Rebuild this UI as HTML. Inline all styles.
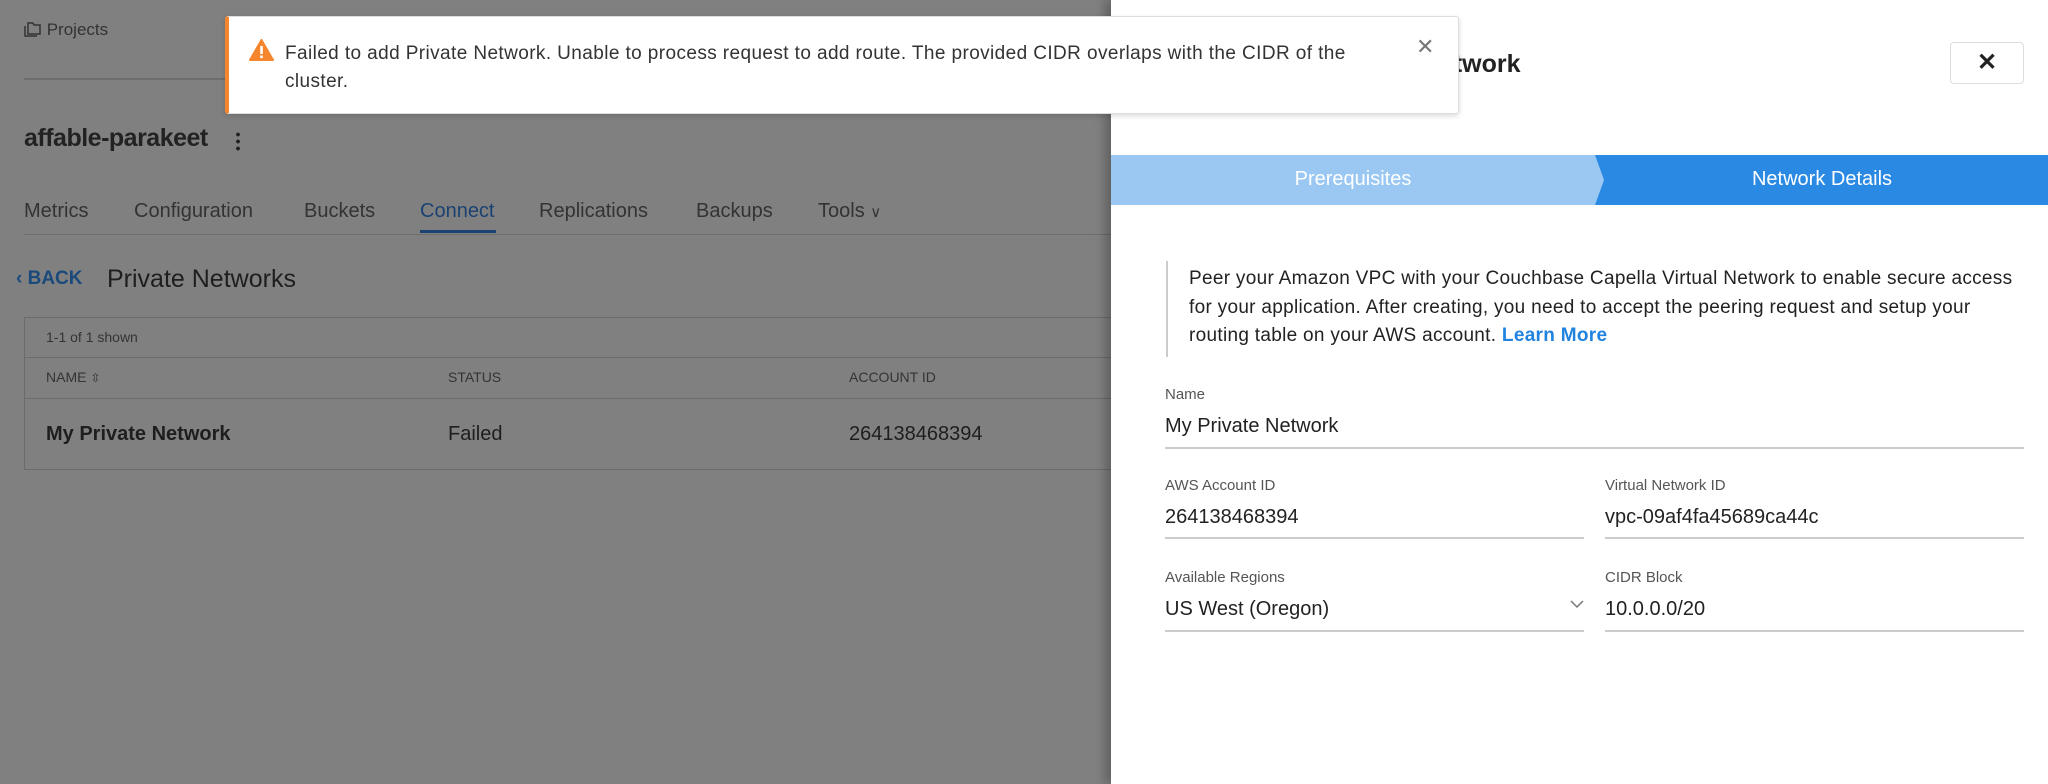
<!DOCTYPE html>
<html><head><meta charset="utf-8"><style>
*{margin:0;padding:0;box-sizing:border-box}
body{width:2048px;height:784px;position:relative;overflow:hidden;background:#808080;font-family:"Liberation Sans",sans-serif;color:#262626}
.a{position:absolute;white-space:nowrap}
</style></head><body>
<div class="a" style="left:24px;top:20px;font-size:17px;color:#333;">
<svg width="18" height="16" viewBox="0 0 18 16" style="vertical-align:-2px"><path d="M4 2h5l1 2h6v9H4z M1 5v10h12" fill="none" stroke="#333" stroke-width="1.5"/></svg> Projects</div>
<div class="a" style="left:24px;top:78px;width:1087px;height:2px;background:#6e6e6e"></div>
<div class="a" style="left:24px;top:124px;font-size:25px;font-weight:bold;color:#222;letter-spacing:-0.5px">affable-parakeet</div>
<div class="a" style="left:236px;top:131px;width:4px;height:20px;background:radial-gradient(circle,#222 1.8px,transparent 2px) 0 0/4px 7px repeat-y"></div>
<div class="a" style="left:0;top:200px;font-size:20px;color:#333;">
<span class="a" style="left:24px">Metrics</span><span class="a" style="left:134px">Configuration</span><span class="a" style="left:304px">Buckets</span><span class="a" style="left:420px;color:#1a4272">Connect</span><span class="a" style="left:539px">Replications</span><span class="a" style="left:696px">Backups</span><span class="a" style="left:818px">Tools <span style="font-size:15px">∨</span></span></div>
<div class="a" style="left:24px;top:234px;width:1087px;height:1px;background:#6e6e6e"></div>
<div class="a" style="left:420px;top:230px;width:76px;height:3px;background:#1a4272"></div>
<div class="a" style="left:16px;top:268px;font-size:19px;font-weight:bold;color:#1a4a7c">‹ BACK</div>
<div class="a" style="left:107px;top:265px;font-size:25px;color:#1e1e1e">Private Networks</div>
<div class="a" style="left:24px;top:317px;width:1100px;height:153px;border:1px solid #6c6c6c"></div>
<div class="a" style="left:24px;top:357px;width:1100px;height:1px;background:#6c6c6c"></div>
<div class="a" style="left:24px;top:398px;width:1100px;height:1px;background:#6c6c6c"></div>
<div class="a" style="left:46px;top:329px;font-size:14px;color:#333">1-1 of 1 shown</div>
<div class="a" style="left:46px;top:369px;font-size:14px;color:#333">NAME <span style="font-size:12px">⇳</span></div>
<div class="a" style="left:448px;top:369px;font-size:14px;color:#333">STATUS</div>
<div class="a" style="left:849px;top:369px;font-size:14px;color:#333">ACCOUNT ID</div>
<div class="a" style="left:46px;top:423px;font-size:20px;font-weight:bold;color:#1e1e1e">My Private Network</div>
<div class="a" style="left:448px;top:423px;font-size:20px;color:#1e1e1e">Failed</div>
<div class="a" style="left:849px;top:423px;font-size:20px;color:#1e1e1e">264138468394</div>

<div class="a" style="left:1111px;top:0;width:937px;height:784px;background:#fff;box-shadow:-6px 0 10px rgba(0,0,0,.25)"></div>
<div class="a" style="left:1276px;top:50px;font-size:25px;font-weight:bold;color:#222">Add Private Network</div>
<div class="a" style="left:1950px;top:42px;width:74px;height:42px;border:1px solid #ddd;border-radius:4px;text-align:center;line-height:40px;font-size:24px;font-weight:bold;color:#222">✕</div>
<svg class="a" style="left:1111px;top:155px" width="937" height="50"><rect width="937" height="50" fill="#2a8ae3"/><polygon points="0,0 484,0 493,25 484,50 0,50" fill="#9ac8f2"/></svg>
<div class="a" style="left:1111px;top:168px;width:484px;text-align:center;font-size:20px;color:#fff">Prerequisites</div>
<div class="a" style="left:1596px;top:168px;width:452px;text-align:center;font-size:20px;color:#fff">Network Details</div>
<div class="a" style="left:1166px;top:261px;width:2px;height:96px;background:#ccc"></div>
<div class="a" style="left:1189px;top:265px;font-size:19px;line-height:28.5px;color:#222;letter-spacing:0.3px">Peer your Amazon VPC with your Couchbase Capella Virtual Network to enable secure access<br>for your application. After creating, you need to accept the peering request and setup your<br>routing table on your AWS account. <b style="color:#1f83df">Learn More</b></div>
<div class="a" style="left:1165px;top:386px;font-size:15px;color:#555">Name</div>
<div class="a" style="left:1165px;top:415px;font-size:20px;color:#222">My Private Network</div>
<div class="a" style="left:1165px;top:447px;width:859px;height:2px;background:#ccc"></div>
<div class="a" style="left:1165px;top:477px;font-size:15px;color:#555">AWS Account ID</div>
<div class="a" style="left:1165px;top:506px;font-size:20px;color:#222">264138468394</div>
<div class="a" style="left:1165px;top:537px;width:419px;height:2px;background:#ccc"></div>
<div class="a" style="left:1605px;top:477px;font-size:15px;color:#555">Virtual Network ID</div>
<div class="a" style="left:1605px;top:506px;font-size:20px;color:#222">vpc-09af4fa45689ca44c</div>
<div class="a" style="left:1605px;top:537px;width:419px;height:2px;background:#ccc"></div>
<div class="a" style="left:1165px;top:569px;font-size:15px;color:#555">Available Regions</div>
<div class="a" style="left:1165px;top:598px;font-size:20px;color:#222">US West (Oregon)</div>
<svg class="a" style="left:1570px;top:599px" width="14" height="10"><path d="M1 2l6 6 6-6" fill="none" stroke="#777" stroke-width="1.5"/></svg>
<div class="a" style="left:1165px;top:630px;width:419px;height:2px;background:#ccc"></div>
<div class="a" style="left:1605px;top:569px;font-size:15px;color:#555">CIDR Block</div>
<div class="a" style="left:1605px;top:598px;font-size:20px;color:#222">10.0.0.0/20</div>
<div class="a" style="left:1605px;top:630px;width:419px;height:2px;background:#ccc"></div>

<div class="a" style="left:225px;top:16px;width:1234px;height:98px;background:#fff;border:1px solid #ddd;border-left:4px solid #f5862e;border-radius:3px;box-shadow:0 2px 6px rgba(0,0,0,.15)"></div>
<svg class="a" style="left:249px;top:39px" width="25" height="22" viewBox="0 0 25 22"><path d="M12.5 1L24 21H1z" fill="#f5862e" stroke="#f5862e" stroke-linejoin="round" stroke-width="2"/><rect x="11.2" y="7" width="2.6" height="8" fill="#fff"/><rect x="11.2" y="16.5" width="2.6" height="2.6" fill="#fff"/></svg>
<div class="a" style="left:285px;top:40px;font-size:19px;line-height:28px;color:#333;letter-spacing:0.4px">Failed to add Private Network. Unable to process request to add route. The provided CIDR overlaps with the CIDR of the<br>cluster.</div>
<div class="a" style="left:1416px;top:34px;font-size:22px;color:#777">✕</div>
</body></html>
